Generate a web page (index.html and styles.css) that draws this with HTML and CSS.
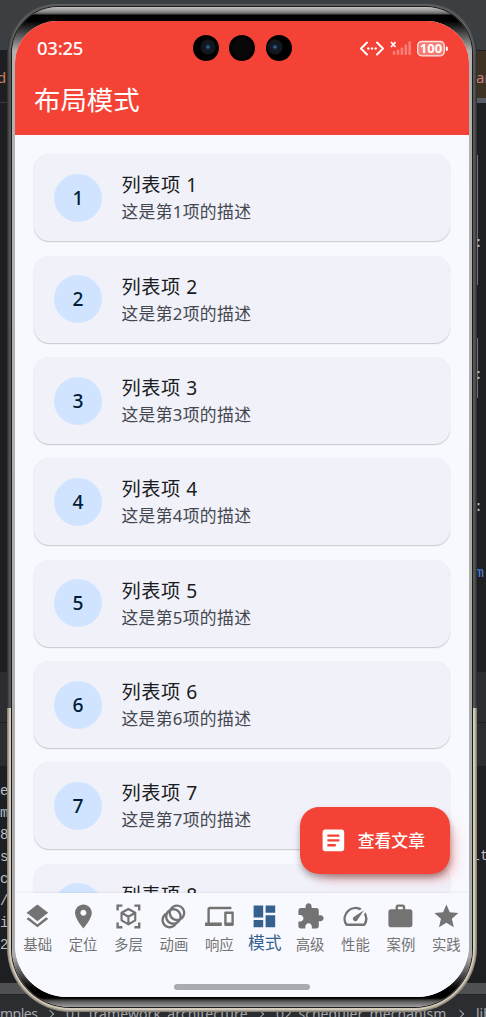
FILE: index.html
```html
<!DOCTYPE html>
<html lang="zh-CN">
<head>
<meta charset="utf-8">
<title>布局模式</title>
<link rel="stylesheet" href="styles.css">
</head>
<body>
<div class="desktop">
  <div class="win title-strip"></div>
  <div class="win tab-strip"></div>
  <div class="win tab-line"></div>
  <div class="win left-line"></div>
  <div class="win tool-strip"></div>
  <div class="win bottom-bar"></div>
  <div class="win guide guide-a"></div>
  <div class="win guide guide-b"></div>
  <span class="code tab-left">d</span>
  <span class="code tab-right">an</span>
  <span class="code colon colon-a">:</span>
  <span class="code colon colon-b">:</span>
  <span class="code colon colon-c">:</span>
  <span class="code call">m(</span>
  <span class="code output-right">it</span>
  <div class="console"><span>e</span><span>m</span><span>8</span><span>s</span><span>c</span><span>/</span><span>i</span><span>2</span></div>
  <div class="crumbs"><span class="c1">mples</span><i></i><span class="c2">01_framework_architecture</span><i></i><span class="c3">02_scheduler_mechanism</span><i></i><span>lib</span></div>

  <div class="phone"><div class="ring"><div class="bezel"><div class="screen">
    <header class="appbar">
      <div class="status">
        <span class="time">03:25</span>
        <div class="cameras"><b class="lens"></b><b></b><b class="lens"></b></div>
        <svg class="sys" width="92" height="20" viewBox="0 0 92 20">
          <g fill="none" stroke="#fff" stroke-width="2" stroke-linecap="round" stroke-linejoin="round"><path d="M8 4.500L2 10.500l6 6M18 4.500l6 6-6 6"/></g>
          <g fill="#fff"><circle cx="9.300" cy="10.500" r="1.200"/><circle cx="13" cy="10.500" r="1.200"/><circle cx="16.700" cy="10.500" r="1.200"/></g>
          <path d="M32 4l4.500 5M36.500 4l-4.500 5" stroke="#fff" stroke-width="1.700"/>
          <g fill="#fff" opacity=".32"><rect x="33.700" y="13" width="2.600" height="4" rx="1"/><rect x="37.700" y="11.500" width="2.600" height="5.500" rx="1"/><rect x="41.600" y="9.500" width="2.600" height="7.500" rx="1"/><rect x="45.500" y="6.500" width="2.600" height="10.500" rx="1"/><rect x="49.400" y="3.300" width="2.600" height="13.700" rx="1"/></g>
          <rect x="58.700" y="3.500" width="26.600" height="14.300" rx="4" fill="#fff" fill-opacity=".3" stroke="#fff" stroke-opacity=".85" stroke-width="1.300"/>
          <rect x="86.800" y="8.500" width="2" height="4.500" rx="1" fill="#fff"/>
          <text x="72" y="15.400" class="battery" text-anchor="middle">100</text>
        </svg>
      </div>
      <h1>布局模式</h1>
    </header>
    <main class="list">
      <article class="card"><b>1</b><div><h2>列表项 1</h2><p>这是第1项的描述</p></div></article>
      <article class="card"><b>2</b><div><h2>列表项 2</h2><p>这是第2项的描述</p></div></article>
      <article class="card"><b>3</b><div><h2>列表项 3</h2><p>这是第3项的描述</p></div></article>
      <article class="card"><b>4</b><div><h2>列表项 4</h2><p>这是第4项的描述</p></div></article>
      <article class="card"><b>5</b><div><h2>列表项 5</h2><p>这是第5项的描述</p></div></article>
      <article class="card"><b>6</b><div><h2>列表项 6</h2><p>这是第6项的描述</p></div></article>
      <article class="card"><b>7</b><div><h2>列表项 7</h2><p>这是第7项的描述</p></div></article>
      <article class="card"><b>8</b><div><h2>列表项 8</h2><p>这是第8项的描述</p></div></article>
    </main>
    <button class="fab"><svg viewBox="0 0 24 24"><path d="M19 3H5c-1.100 0-2 .9-2 2v14c0 1.100.9 2 2 2h14c1.100 0 2-.9 2-2V5c0-1.100-.9-2-2-2zm-5 14H7v-2h7v2zm3-4H7v-2h10v2zm0-4H7V7h10v2z"/></svg><span>查看文章</span></button>
    <footer class="bottom">
      <nav class="tabs">
        <a><svg viewBox="0 0 24 24"><path d="M11.990 18.540l-7.370-5.730L3 14.070l9 7 9-7-1.630-1.270-7.380 5.740zM12 16l7.360-5.730L21 9l-9-7-9 7 1.630 1.270L12 16z"/></svg><span>基础</span></a>
        <a><svg viewBox="0 0 24 24"><path d="M12 2C8.130 2 5 5.130 5 9c0 5.250 7 13 7 13s7-7.750 7-13c0-3.870-3.130-7-7-7zm0 9.500c-1.380 0-2.500-1.120-2.500-2.500s1.120-2.500 2.500-2.500 2.500 1.120 2.500 2.500-1.120 2.500-2.500 2.500z"/></svg><span>定位</span></a>
        <a><svg viewBox="0 0 24 24"><g fill="none" stroke="currentColor" stroke-width="2"><path d="M3 7V3h4M17 3h4v4M21 17v4h-4M7 21H3v-4"/><path stroke-width="1.800" stroke-linejoin="round" d="M12 5.800l5.700 3.200v6.300L12 18.600l-5.700-3.300V9zM6.300 9l5.700 3.300L17.700 9M12 12.300v6.300"/></g></svg><span>多层</span></a>
        <a><svg viewBox="0 0 24 24"><path d="M15 2c-2.710 0-5.050 1.540-6.220 3.780-1.280.67-2.340 1.720-3 3C3.540 9.950 2 12.290 2 15c0 3.870 3.130 7 7 7 2.710 0 5.050-1.540 6.220-3.780 1.280-.67 2.340-1.720 3-3C20.460 14.050 22 11.710 22 9c0-3.870-3.130-7-7-7zM9 20c-2.760 0-5-2.240-5-5 0-1.120.37-2.160 1-3 0 3.870 3.130 7 7 7-.84.63-1.880 1-3 1zm3-3c-2.760 0-5-2.240-5-5 0-1.120.37-2.160 1-3 0 3.860 3.130 6.990 7 7-.84.63-1.880 1-3 1zm4.700-3.300c-.53.19-1.100.3-1.700.3-2.760 0-5-2.240-5-5 0-.6.11-1.170.3-1.700.53-.19 1.100-.3 1.700-.3 2.760 0 5 2.240 5 5 0 .6-.11 1.170-.3 1.700zM19 12c0-3.860-3.130-6.990-7-7 .84-.63 1.870-1 3-1 2.760 0 5 2.240 5 5 0 1.120-.37 2.160-1 3z"/></svg><span>动画</span></a>
        <a><svg viewBox="0 0 24 24"><path d="M4 6h18V4H4c-1.100 0-2 .9-2 2v11H0v3h14v-3H4V6zm19 2h-6c-.55 0-1 .45-1 1v10c0 .55.45 1 1 1h6c.55 0 1-.45 1-1V9c0-.55-.45-1-1-1zm-1 9h-4v-7h4v7z"/></svg><span>响应</span></a>
        <a class="on"><svg viewBox="0 0 24 24"><path d="M3 13h8V3H3v10zm0 8h8v-6H3v6zm10 0h8V11h-8v10zm0-18v6h8V3h-8z"/></svg><span>模式</span></a>
        <a><svg viewBox="0 0 24 24"><path d="M20.500 11H19V7c0-1.100-.9-2-2-2h-4V3.500C13 2.120 11.880 1 10.500 1S8 2.120 8 3.500V5H4c-1.100 0-1.990.9-1.990 2v3.800H3.500c1.490 0 2.700 1.210 2.700 2.700s-1.210 2.700-2.700 2.700H2V20c0 1.100.9 2 2 2h3.800v-1.500c0-1.490 1.210-2.700 2.700-2.700 1.490 0 2.700 1.210 2.700 2.700V22H17c1.100 0 2-.9 2-2v-4h1.500c1.380 0 2.500-1.120 2.500-2.500S21.880 11 20.500 11z"/></svg><span>高级</span></a>
        <a><svg viewBox="0 0 24 24"><path d="M20.380 8.570l-1.230 1.850a8 8 0 0 1-.22 7.580H5.070A8 8 0 0 1 15.580 6.850l1.850-1.230A10 10 0 0 0 3.350 19a2 2 0 0 0 1.720 1h13.850a2 2 0 0 0 1.740-1 10 10 0 0 0-.27-10.440zm-9.790 6.840a2 2 0 0 0 2.830 0l5.660-8.490-8.490 5.660a2 2 0 0 0 0 2.830z"/></svg><span>性能</span></a>
        <a><svg viewBox="0 0 24 24"><path d="M20 6h-4V4c0-1.110-.89-2-2-2h-4c-1.110 0-2 .89-2 2v2H4c-1.110 0-1.990.89-1.990 2L2 19c0 1.110.89 2 2 2h16c1.110 0 2-.89 2-2V8c0-1.110-.89-2-2-2zm-6 0h-4V4h4v2z"/></svg><span>案例</span></a>
        <a><svg viewBox="0 0 24 24"><path d="M12 17.270L18.180 21l-1.640-7.030L22 9.240l-7.190-.61L12 2 9.190 8.630 2 9.240l5.460 4.730L5.820 21z"/></svg><span>实践</span></a>
      </nav>
      <div class="home"></div>
    </footer>
  </div></div></div></div>
</div>
</body>
</html>
```

FILE: styles.css
```css
* { box-sizing: border-box; }
body { margin: 0; font-family: "Noto Sans", "Noto Sans CJK SC", sans-serif; }
h1, h2, p { margin: 0; font-weight: 400; }

/* IDE windows behind the device */
.desktop { position: relative; width: 486px; height: 1017px; overflow: hidden; background: #1e1f22; }
.win { position: absolute; left: 0; right: 0; }
.title-strip { top: 0; height: 50px; background: #3c3f41; }
.tab-strip { top: 51px; height: 47px; left: 243px; background: #3d3223; }
.tab-line { top: 98px; height: 5px; left: 243px; background: #5a5c65; }
.left-line { top: 102px; height: 1px; right: 243px; background: #393b40; }
.tool-strip { top: 672px; height: 94px; background: linear-gradient(#2b2d30 50px, #1e1f22 50px, #1e1f22 51px, #2b2d30 51px); }
.bottom-bar { top: 983px; height: 34px; background: linear-gradient(#4e5052 11px, #1e1f22 11px, #2b2d30 12px); }
.guide { left: 476px; width: 2px; background: #6f7275; }
.guide-a { top: 155px; height: 130px; }
.guide-b { top: 338px; height: 60px; }
.code { position: absolute; font: 15px/20px "Liberation Mono", monospace; color: #bcbec4; white-space: nowrap; }
.tab-left { left: -3px; top: 67px; color: #cf7b62; font-family: "Noto Sans"; }
.tab-right { left: 476px; top: 67px; color: #c98079; font-family: "Noto Sans"; }
.colon { left: 474px; }
.colon-a { top: 234px; }
.colon-b { top: 366px; }
.colon-c { top: 498px; }
.call { left: 475px; top: 564px; color: #4a88e0; }
.output-right { left: 471px; top: 847px; }
.console { position: absolute; left: 0; top: 780px; display: grid; font: 14px/22px "Liberation Mono", monospace; color: #bcbec4; }
.crumbs { position: absolute; left: 0; top: 1004px; display: flex; align-items: center; font-size: 14px; line-height: 20px; color: #a5a8ae; white-space: nowrap; }
.crumbs i { width: 6px; height: 6px; border: solid #a5a8ae; border-width: 1px 1px 0 0; transform: rotate(45deg); margin: 0 13px 0 11px; }
.crumbs .c1 { width: 36px; letter-spacing: -.5px; }
.crumbs .c2 { width: 180px; letter-spacing: .1px; }
.crumbs .c3 { width: 170px; letter-spacing: .05px; }

/* Device body */
.phone { position: absolute; left: 7px; top: 4px; width: 470px; height: 1008px; padding: 1px; border-radius: 50px 50px 64px 64px; background: linear-gradient(#5f6163 0, #323232 40px, #323232 704px, #8d8474 704px); }
.ring { height: 100%; padding: 2px 4px 4px; border-radius: 49px 49px 63px 63px; background: linear-gradient(#6f7072 0, #555 60px, #555 703px, #d2cabb 703px); box-shadow: inset 0 0 0 1px #0003; }
.bezel { height: 100%; padding: 14px 3px 10px; border-radius: 46px 46px 58px 58px; background: linear-gradient(#c4c4c4 0, #858585 5px, #555 7px, #000 8px, #000 14px, #b2b2b2 44px, #a9a9a9 950px, #000 982px, #000 991px, #555 994px, #a0a0a0 1000px); box-shadow: 0 0 0 1px #1c1c1c; }
.screen { position: relative; height: 976px; border-radius: 42px 42px 52px 52px; overflow: hidden; display: flex; flex-direction: column; background: #f8f9ff; }

.appbar { flex: none; height: 114px; background: #f44336; color: #fff; }
.status { display: grid; grid-template-columns: 178px 1fr 110.500px; align-items: center; height: 54px; }
.time { padding-left: 22px; margin-top: -2px; font-size: 18.500px; font-weight: 500; letter-spacing: -.25px; }
.cameras { display: flex; gap: 10.400px; }
.cameras b { width: 26px; height: 26px; border-radius: 50%; background: radial-gradient(#080808 50%, #000 60%); }
.cameras .lens { background: radial-gradient(circle at 15px 12px, #5f8ac6 0, #1b3757 1.500px, #101820 3.500px, #14171b 7px, #000 8px); }
.cameras .lens:last-child { background: radial-gradient(circle at 9px 12px, #5f8ac6 0, #1b3757 1.500px, #101820 3.500px, #14171b 7px, #000 8px); }
.battery { font: 700 13px "Noto Sans", sans-serif; fill: #fff; }
.appbar h1 { padding: 5px 0 0 19px; font-size: 26.400px; line-height: 40px; }

.list { flex: 1; min-height: 0; overflow: hidden; display: flex; flex-direction: column; gap: 14.200px; padding: 19.300px 19.400px 0; }
.card { flex: none; height: 87.150px; display: flex; align-items: center; gap: 19.500px; padding: 0 19.500px; border-radius: 15.500px; background: #f1f1fa; box-shadow: 0 1px 1.200px #00000033, 0 0 1px #0000000f; }
.card b { width: 48px; height: 48px; border-radius: 50%; background: #d1e4ff; color: #001d36; font-size: 19.200px; font-weight: 500; line-height: 48px; text-align: center; }
.card h2 { color: #191c20; font-size: 19.200px; line-height: 29px; letter-spacing: .6px; }
.card p { color: #43474e; font-size: 16.800px; line-height: 26px; letter-spacing: .35px; }

.fab { position: absolute; right: 19px; top: 785.500px; width: 150px; height: 67.200px; display: flex; align-items: center; gap: 10px; padding: 0 0 0 19px; border: 0; border-radius: 19.200px; background: #f44336; color: #fff; font: 500 16.800px "Noto Sans", "Noto Sans CJK SC", sans-serif; box-shadow: 0 4px 6px #0000004d, 9px 10px 16px -10px #f44336b0; }
.fab svg { width: 28.800px; height: 28.800px; fill: #fff; }

.bottom { position: relative; flex: none; height: 104px; background: #f8f9ff; box-shadow: 0 -1px 2px #0000000f; }
.tabs { display: grid; grid-template-columns: repeat(10, 1fr); padding-top: 9px; }
.tabs a { display: flex; flex-direction: column; align-items: center; color: #737373; font-size: 14.400px; line-height: 20px; white-space: nowrap; }
.tabs svg { width: 28.800px; height: 28.800px; fill: currentColor; }
.tabs span { margin-top: 4px; }
.tabs .on { color: #36618e; font-size: 16.800px; }
.tabs .on span { margin-top: 2px; }
.home { width: 136px; height: 6px; margin: 29px auto 0; border-radius: 3px; background: #a9abb0; }
```
